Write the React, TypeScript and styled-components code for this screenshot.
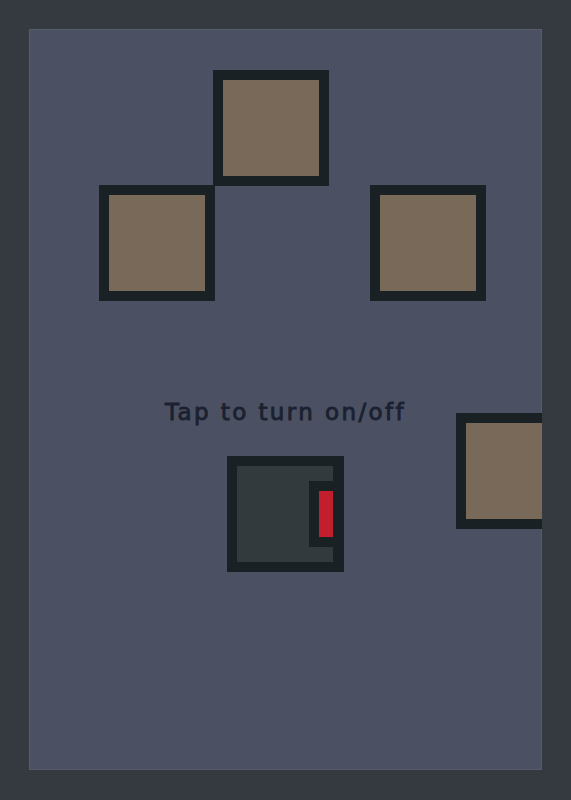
import React, { useState } from 'react'
import styled, { createGlobalStyle } from 'styled-components';

const GlobalStyle = createGlobalStyle`
    html, body {
        margin: 0;
        padding: 0;
        background: #343a3f;
    }
`;

const Frame = styled.div`
    padding: 29px;
    height: 800px;
    box-sizing: border-box;
`;

const Board = styled.div`
    position: relative;
    overflow: hidden;
    height: 741px;
    background: #4b5162;
    box-shadow: inset 0 0 0 1px #555c6c;
    display: flex;
    flex-direction: column;
    align-items: center;
    padding-top: 369px;
    box-sizing: border-box;
`;

const Tile = styled.div<{ $x: number; $y: number }>`
    position: absolute;
    left: ${p => p.$x}px;
    top: ${p => p.$y}px;
    width: 96px;
    height: 96px;
    border: 10px solid #192124;
    background: #786958;
`;

const Hint = styled.div`
    font-family: "DejaVu Sans", sans-serif;
    font-size: 23px;
    line-height: 28px;
    letter-spacing: 2.4px;
    color: #1b2130;
    -webkit-text-stroke: 0.9px #1b2130;
`;

const Switch = styled.button<{ $on: boolean }>`
    position: relative;
    margin-top: 30px;
    width: 117px;
    height: 116px;
    padding: 0;
    border: 10px solid #192124;
    border-right-width: 11px;
    background: #333a3d;
    cursor: pointer;
`;

const Lamp = styled.span<{ $on: boolean }>`
    position: absolute;
    right: 0;
    top: 15px;
    width: 14px;
    height: 46px;
    border: 10px solid #192124;
    border-right: 0;
    background: ${p => (p.$on ? '#3fbf4a' : '#c11f2e')};
`;

const tiles = [
    { x: 184, y: 41 },
    { x: 70, y: 156 },
    { x: 341, y: 156 },
    { x: 427, y: 384 },
];

const App: React.FC = () => {
    const [on, setOn] = useState(false);
    return (
        <>
            <GlobalStyle />
            <Frame>
                <Board>
                    {tiles.map((t, i) => (
                        <Tile key={i} $x={t.x} $y={t.y} />
                    ))}
                    <Hint>Tap to turn on/off</Hint>
                    <Switch $on={on} onClick={() => setOn(!on)}>
                        <Lamp $on={on} />
                    </Switch>
                </Board>
            </Frame>
        </>
    )
}

export default App
